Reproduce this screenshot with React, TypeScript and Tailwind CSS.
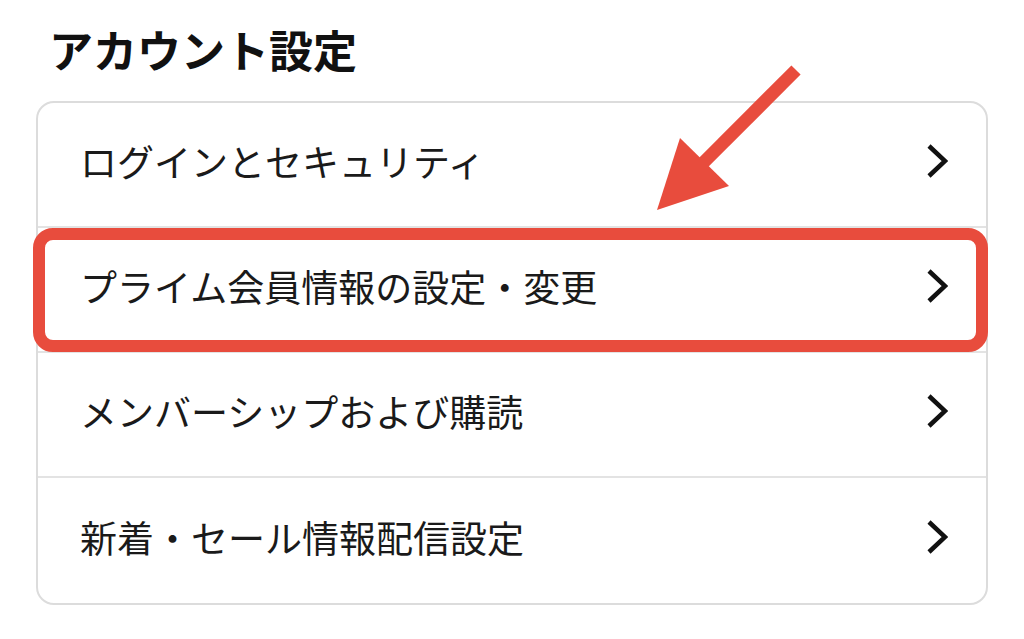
const rows = [
  "ログインとセキュリティ",
  "プライム会員情報の設定・変更",
  "メンバーシップおよび購読",
  "新着・セール情報配信設定",
];

function Chevron() {
  return (
    <svg width="22" height="36" viewBox="0 0 22 36" fill="none" className="shrink-0">
      <path d="M3 3 L19 18 L3 33" stroke="#111" strokeWidth="4.5" strokeLinecap="butt" strokeLinejoin="miter" />
    </svg>
  );
}

export default function App() {
  return (
    <div
      className="relative h-[639px] w-[1024px] overflow-hidden bg-white text-[#1a1a1a]"
      style={{ fontFamily: '"Noto Sans CJK JP", "Noto Sans", sans-serif' }}
    >
      <div className="pl-[36px] pr-[36px] pt-[27px]">
        <h1 className="pl-[13px] text-[44px] font-bold leading-[44px] text-[#111]">アカウント設定</h1>
        <div className="mt-[30px] rounded-[18px] border-2 border-[#dcdcdc] bg-white">
          <ul className="divide-y-2 divide-[#e3e3e3]">
            {rows.map((label, i) => (
              <li key={label} className="relative flex h-[125px] items-center justify-between pb-[7px] pl-[42px] pr-[38px]">
                <span className="text-[37px] font-normal leading-none">{label}</span>
                <Chevron />
                {i === 1 ? (
                  <div className="pointer-events-none absolute -left-[5px] -right-[2px] top-0 -bottom-[1px] rounded-[20px] border-[12px] border-[#e84c3d]" />
                ) : null}
              </li>
            ))}
          </ul>
        </div>
      </div>

      <svg className="pointer-events-none absolute inset-0" width="1024" height="639" viewBox="0 0 1024 639">
        <line x1="796" y1="70" x2="700" y2="166" stroke="#e84c3d" strokeWidth="13" />
        <polygon points="680,138 729,186 657,210" fill="#e84c3d" />
      </svg>
    </div>
  );
}
